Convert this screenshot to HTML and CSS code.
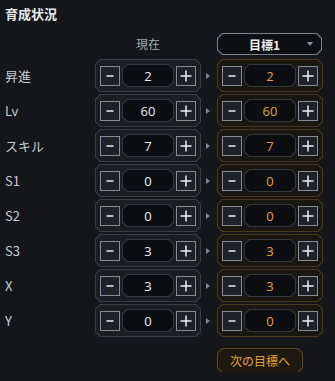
FILE: index.html
```html
<!DOCTYPE html>
<html>
<head>
  <title>育成状況</title>
  <meta name="viewport" content="width=device-width, initial-scale=1.0">
  <link rel="stylesheet" href="styles.css">
</head>
<body>
  <div class="panel">
    <h1>育成状況</h1>

    <div class="grid">
      <div></div>
      <div class="col-head">現在</div>
      <div></div>
      <div class="select"><div class="select-in"><span>目標1</span><i class="caret"></i></div></div>

      <div class="label">昇進</div>
      <div class="box"><div class="box-in"><button class="btn"><svg viewBox="0 0 18 18"><path d="M5.5 9h7"/></svg></button><div class="val"><div class="val-in">2</div></div><button class="btn"><svg viewBox="0 0 18 18"><path d="M9 3.5v11M3.5 9h11"/></svg></button></div></div>
      <div class="arrow"></div>
      <div class="box gold"><div class="box-in"><button class="btn"><svg viewBox="0 0 18 18"><path d="M5.5 9h7"/></svg></button><div class="val"><div class="val-in">2</div></div><button class="btn"><svg viewBox="0 0 18 18"><path d="M9 3.5v11M3.5 9h11"/></svg></button></div></div>

      <div class="label">Lv</div>
      <div class="box"><div class="box-in"><button class="btn"><svg viewBox="0 0 18 18"><path d="M5.5 9h7"/></svg></button><div class="val"><div class="val-in">60</div></div><button class="btn"><svg viewBox="0 0 18 18"><path d="M9 3.5v11M3.5 9h11"/></svg></button></div></div>
      <div class="arrow"></div>
      <div class="box gold"><div class="box-in"><button class="btn"><svg viewBox="0 0 18 18"><path d="M5.5 9h7"/></svg></button><div class="val"><div class="val-in">60</div></div><button class="btn"><svg viewBox="0 0 18 18"><path d="M9 3.5v11M3.5 9h11"/></svg></button></div></div>

      <div class="label">スキル</div>
      <div class="box"><div class="box-in"><button class="btn"><svg viewBox="0 0 18 18"><path d="M5.5 9h7"/></svg></button><div class="val"><div class="val-in">7</div></div><button class="btn"><svg viewBox="0 0 18 18"><path d="M9 3.5v11M3.5 9h11"/></svg></button></div></div>
      <div class="arrow"></div>
      <div class="box gold"><div class="box-in"><button class="btn"><svg viewBox="0 0 18 18"><path d="M5.5 9h7"/></svg></button><div class="val"><div class="val-in">7</div></div><button class="btn"><svg viewBox="0 0 18 18"><path d="M9 3.5v11M3.5 9h11"/></svg></button></div></div>

      <div class="label">S1</div>
      <div class="box"><div class="box-in"><button class="btn"><svg viewBox="0 0 18 18"><path d="M5.5 9h7"/></svg></button><div class="val"><div class="val-in">0</div></div><button class="btn"><svg viewBox="0 0 18 18"><path d="M9 3.5v11M3.5 9h11"/></svg></button></div></div>
      <div class="arrow"></div>
      <div class="box gold"><div class="box-in"><button class="btn"><svg viewBox="0 0 18 18"><path d="M5.5 9h7"/></svg></button><div class="val"><div class="val-in">0</div></div><button class="btn"><svg viewBox="0 0 18 18"><path d="M9 3.5v11M3.5 9h11"/></svg></button></div></div>

      <div class="label">S2</div>
      <div class="box"><div class="box-in"><button class="btn"><svg viewBox="0 0 18 18"><path d="M5.5 9h7"/></svg></button><div class="val"><div class="val-in">0</div></div><button class="btn"><svg viewBox="0 0 18 18"><path d="M9 3.5v11M3.5 9h11"/></svg></button></div></div>
      <div class="arrow"></div>
      <div class="box gold"><div class="box-in"><button class="btn"><svg viewBox="0 0 18 18"><path d="M5.5 9h7"/></svg></button><div class="val"><div class="val-in">0</div></div><button class="btn"><svg viewBox="0 0 18 18"><path d="M9 3.5v11M3.5 9h11"/></svg></button></div></div>

      <div class="label">S3</div>
      <div class="box"><div class="box-in"><button class="btn"><svg viewBox="0 0 18 18"><path d="M5.5 9h7"/></svg></button><div class="val"><div class="val-in">3</div></div><button class="btn"><svg viewBox="0 0 18 18"><path d="M9 3.5v11M3.5 9h11"/></svg></button></div></div>
      <div class="arrow"></div>
      <div class="box gold"><div class="box-in"><button class="btn"><svg viewBox="0 0 18 18"><path d="M5.5 9h7"/></svg></button><div class="val"><div class="val-in">3</div></div><button class="btn"><svg viewBox="0 0 18 18"><path d="M9 3.5v11M3.5 9h11"/></svg></button></div></div>

      <div class="label">X</div>
      <div class="box"><div class="box-in"><button class="btn"><svg viewBox="0 0 18 18"><path d="M5.5 9h7"/></svg></button><div class="val"><div class="val-in">3</div></div><button class="btn"><svg viewBox="0 0 18 18"><path d="M9 3.5v11M3.5 9h11"/></svg></button></div></div>
      <div class="arrow"></div>
      <div class="box gold"><div class="box-in"><button class="btn"><svg viewBox="0 0 18 18"><path d="M5.5 9h7"/></svg></button><div class="val"><div class="val-in">3</div></div><button class="btn"><svg viewBox="0 0 18 18"><path d="M9 3.5v11M3.5 9h11"/></svg></button></div></div>

      <div class="label">Y</div>
      <div class="box"><div class="box-in"><button class="btn"><svg viewBox="0 0 18 18"><path d="M5.5 9h7"/></svg></button><div class="val"><div class="val-in">0</div></div><button class="btn"><svg viewBox="0 0 18 18"><path d="M9 3.5v11M3.5 9h11"/></svg></button></div></div>
      <div class="arrow"></div>
      <div class="box gold"><div class="box-in"><button class="btn"><svg viewBox="0 0 18 18"><path d="M5.5 9h7"/></svg></button><div class="val"><div class="val-in">0</div></div><button class="btn"><svg viewBox="0 0 18 18"><path d="M9 3.5v11M3.5 9h11"/></svg></button></div></div>

      <div></div>
      <div></div>
      <div></div>
      <div class="next-wrap"><button class="next"><span class="next-in">次の目標へ</span></button></div>
    </div>
  </div>
</body>
</html>
```

FILE: styles.css
```css
body {
  margin: 0;
  background-color: #141619;
  font-family: "Noto Sans CJK JP", "Noto Sans", sans-serif;
  color: #c9ccd1;
}
.panel {
  padding: 6px 0 0 5px;
}
h1 {
  margin: 0;
  font-size: 13px;
  line-height: 16px;
  font-weight: 700;
  color: #e6e7ea;
}
.grid {
  display: grid;
  grid-template-columns: 90px 106px 16px 106px;
  grid-template-rows: 24px;
  grid-auto-rows: 33px;
  row-gap: 2px;
  margin-top: 11px;
}
.col-head {
  text-align: center;
  font-size: 12px;
  line-height: 22px;
  color: #a7abb2;
}
.label {
  font-size: 13px;
  line-height: 33px;
  color: #c9ccd1;
}

/* chamfered frames: outer = border colour, inner = fill */
.select, .box, .val, .next {
  --c: 5px;
  padding: 1px;
  box-sizing: border-box;
  clip-path: polygon(var(--c) 0, calc(100% - var(--c)) 0, 100% var(--c), 100% calc(100% - var(--c)), calc(100% - var(--c)) 100%, var(--c) 100%, 0 calc(100% - var(--c)), 0 var(--c));
}
.select-in, .box-in, .val-in, .next-in {
  --c: 4.6px;
  height: 100%;
  box-sizing: border-box;
  clip-path: polygon(var(--c) 0, calc(100% - var(--c)) 0, 100% var(--c), 100% calc(100% - var(--c)), calc(100% - var(--c)) 100%, var(--c) 100%, 0 calc(100% - var(--c)), 0 var(--c));
}

.select {
  width: 105px;
  height: 22px;
  background: #7d828a;
}
.select-in {
  background: #0e0f12;
  display: flex;
  align-items: center;
  justify-content: center;
  position: relative;
  font-size: 12px;
  font-weight: 700;
  color: #eceef1;
  padding-right: 10px;
}
.caret {
  position: absolute;
  right: 8px;
  top: 8px;
  border-left: 3px solid transparent;
  border-right: 3px solid transparent;
  border-top: 4px solid #8d929a;
}

.box {
  background: #3a3e45;
}
.box-in {
  background: #1b1d21;
  display: flex;
  align-items: center;
  justify-content: center;
  gap: 2px;
}
.box.gold {
  background: #4a3a1b;
}
.box.gold .box-in {
  background: #191712;
}
.box.gold .val-in {
  color: #e3a238;
}

.btn {
  width: 20px;
  height: 20px;
  padding: 0;
  border: 1px solid #878c94;
  background: #1e2228;
  margin-top: 1px;
}
.btn svg {
  display: block;
  width: 18px;
  height: 18px;
  fill: none;
  stroke: #eef0f2;
  stroke-width: 1.5;
}
.val {
  width: 52px;
  height: 23px;
  background: #35383e;
}
.val-in {
  background: #0c0d10;
  display: flex;
  align-items: center;
  justify-content: center;
  font-family: "Open Sans", sans-serif;
  font-size: 13px;
  color: #eceef1;
}

.arrow {
  align-self: center;
  justify-self: center;
  width: 0;
  height: 0;
  margin-left: -3px;
  border-top: 3px solid transparent;
  border-bottom: 3px solid transparent;
  border-left: 4px solid #80858d;
}

.next-wrap {
  padding-top: 8px;
}
.next {
  width: 86px;
  height: 25px;
  border: none;
  background: #5a4520;
  font-family: "Noto Sans CJK JP", sans-serif;
}
.next-in {
  display: flex;
  align-items: center;
  justify-content: center;
  background: #1e1910;
  color: #e3a238;
  font-size: 12px;
}
```
